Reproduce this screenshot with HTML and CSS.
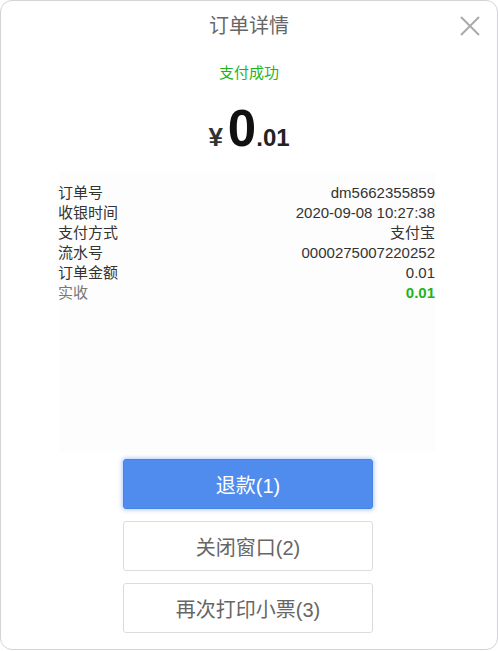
FILE: index.html
```html
<!DOCTYPE html>
<html lang="zh-CN">
<head>
  <meta charset="UTF-8">
  <meta name="viewport" content="width=device-width, initial-scale=1.0">
  <title>订单详情</title>
  <link rel="stylesheet" href="styles.css">
</head>
<body>
  <div class="dialog">
    <div class="header">
      <h1 class="title">订单详情</h1>
      <button class="close" aria-label="关闭">
        <svg width="22" height="22" viewBox="0 0 22 22">
          <path d="M2 2 L20 20 M20 2 L2 20" stroke="#aaa" stroke-width="2" fill="none"/>
        </svg>
      </button>
    </div>

    <div class="status">支付成功</div>

    <div class="amount">
      <span class="yen">¥</span><span class="int">0</span><span class="dec">.01</span>
    </div>

    <div class="details">
      <div class="row"><span>订单号</span><span>dm5662355859</span></div>
      <div class="row"><span>收银时间</span><span>2020-09-08 10:27:38</span></div>
      <div class="row"><span>支付方式</span><span>支付宝</span></div>
      <div class="row"><span>流水号</span><span>0000275007220252</span></div>
      <div class="row"><span>订单金额</span><span>0.01</span></div>
      <div class="row paid"><span>实收</span><span class="paid-value">0.01</span></div>
    </div>

    <div class="actions">
      <button class="btn btn-primary">退款(1)</button>
      <button class="btn">关闭窗口(2)</button>
      <button class="btn">再次打印小票(3)</button>
    </div>
  </div>
</body>
</html>
```

FILE: styles.css
```css
* {
  box-sizing: border-box;
}

body {
  margin: 0;
  padding: 0;
  font-family: "Liberation Sans", Arial, "Noto Sans CJK SC", sans-serif;
  background-color: #fff;
}

.dialog {
  position: relative;
  width: 498px;
  height: 650px;
  border: 1px solid #d4d4d8;
  border-radius: 12px;
  background-color: #fff;
}

.header {
  height: 49px;
  display: flex;
  align-items: center;
  justify-content: center;
}

.title {
  margin: 0;
  font-size: 20px;
  font-weight: normal;
  color: #666;
  line-height: 24px;
}

.close {
  position: absolute;
  top: 14px;
  right: 16px;
  padding: 0;
  border: none;
  background: none;
  cursor: pointer;
  line-height: 0;
}

.status {
  margin-top: 13px;
  text-align: center;
  font-size: 15px;
  line-height: 20px;
  color: #1db51d;
}

.amount {
  margin-top: 22px;
  height: 60px;
  text-align: center;
  line-height: 48px;
  font-weight: bold;
  color: #222;
}

.yen {
  font-size: 26px;
  color: #333;
  margin-right: 5px;
}

.int {
  font-size: 51px;
  color: #111;
}

.dec {
  font-size: 24px;
}

.details {
  margin: 6px 0 0 58px;
  width: 376px;
  height: 282px;
  padding-top: 12px;
  background-color: #fdfdfd;
}

.row {
  display: flex;
  justify-content: space-between;
  margin-left: -1px;
  font-size: 15px;
  line-height: 20px;
  color: #333;
}

.row.paid {
  color: #777;
}

.paid-value {
  color: #1db51d;
  font-weight: bold;
}

.actions {
  display: flex;
  flex-direction: column;
  align-items: center;
  gap: 12px;
  margin-top: 6px;
  padding-right: 2px;
}

.btn {
  width: 250px;
  height: 50px;
  border: 1px solid #dcdcdc;
  border-radius: 3px;
  background-color: #fff;
  color: #666;
  font-family: inherit;
  font-size: 20px;
  cursor: pointer;
}

.btn-primary {
  border-color: #4a82e4;
  background-color: #4f8cee;
  color: #fff;
  box-shadow: 0 0 4px 1px rgba(79, 140, 238, 0.45);
}
```
